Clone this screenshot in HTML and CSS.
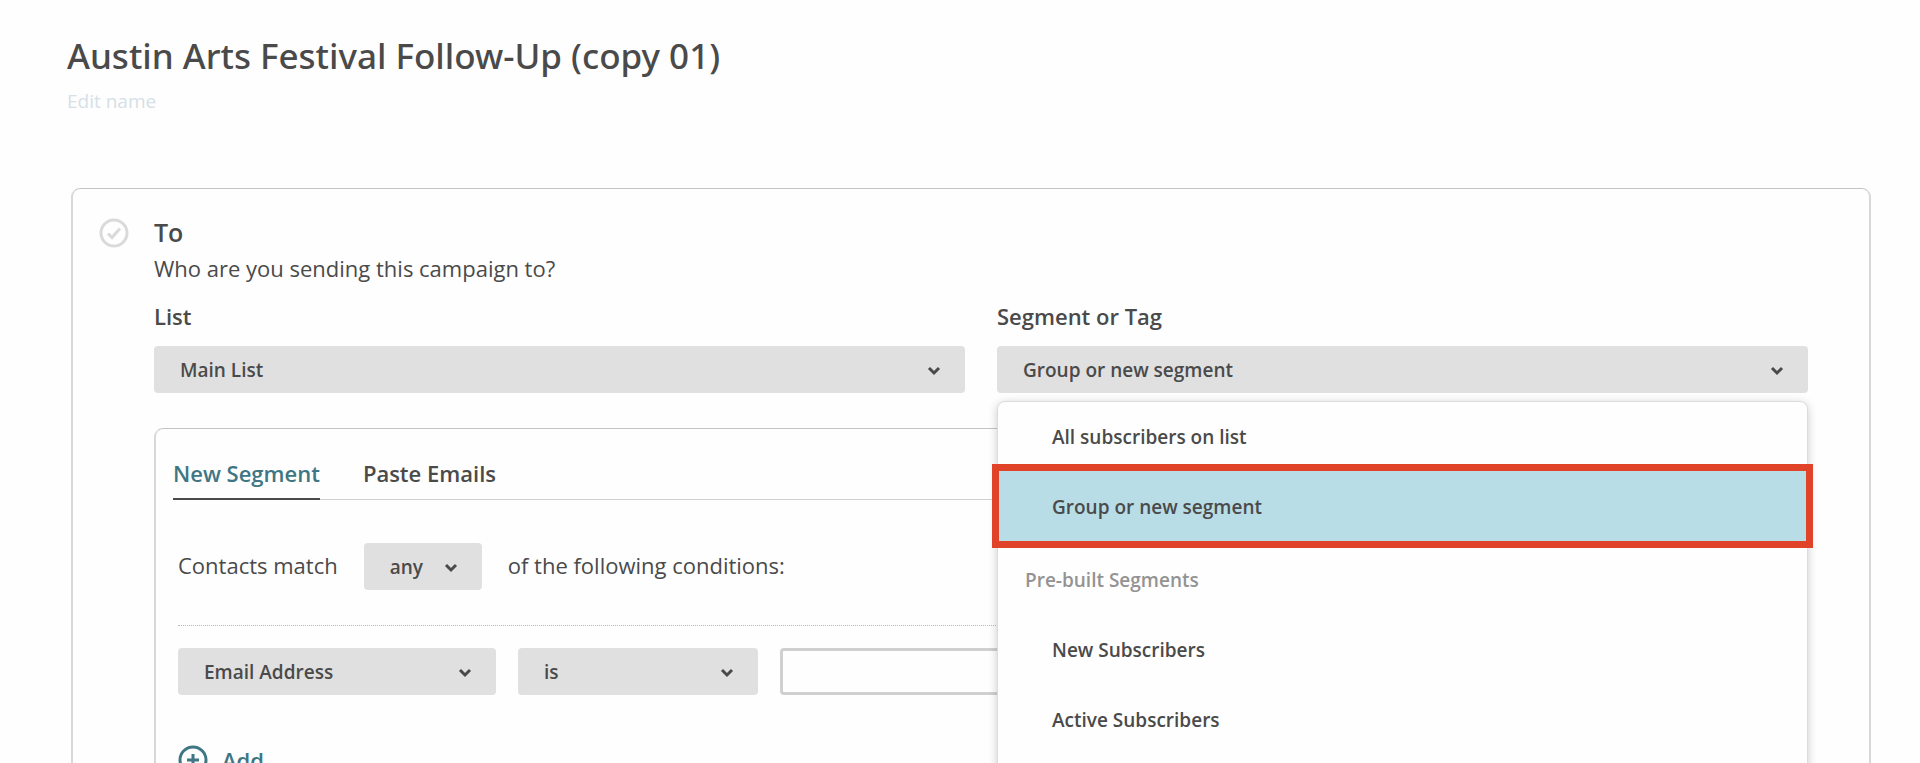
FILE: index.html
```html
<!DOCTYPE html>
<html lang="en">

<head>
    <meta charset="utf-8">
    <title>Austin Arts Festival Follow-Up (copy 01)</title>
    <meta name="viewport" content="width=device-width, initial-scale=1">
    <link rel="stylesheet" href="styles.css">
</head>

<body>
    <header class="page-header">
        <h1>Austin Arts Festival Follow-Up (copy 01)</h1>
        <a class="edit-name" href="#">Edit name</a>
    </header>

    <main class="card">
        <svg class="status-icon" viewBox="0 0 30 30" aria-hidden="true">
            <circle cx="15" cy="15" r="13" />
            <path d="M9 15.5l4 4 8-9" />
        </svg>

        <section class="card-body">
            <h2>To</h2>
            <p class="lead">Who are you sending this campaign to?</p>

            <div class="fields">
                <div class="field">
                    <label for="list">List</label>
                    <div class="select">
                        <select id="list">
                            <option>Main List</option>
                        </select>
                        <svg class="chevron" viewBox="0 0 14 10" aria-hidden="true"><path d="M2 2l5 5 5-5" /></svg>
                    </div>
                </div>
                <div class="field">
                    <label for="segment">Segment or Tag</label>
                    <div class="select">
                        <select id="segment">
                            <option>Group or new segment</option>
                        </select>
                        <svg class="chevron" viewBox="0 0 14 10" aria-hidden="true"><path d="M2 2l5 5 5-5" /></svg>
                    </div>
                    <!-- open dropdown -->
                    <div class="menu">
                        <button type="button" class="menu-item">All subscribers on list</button>
                        <button type="button" class="menu-item active">Group or new segment</button>
                        <div class="menu-heading">Pre-built Segments</div>
                        <button type="button" class="menu-item">New Subscribers</button>
                        <button type="button" class="menu-item">Active Subscribers</button>
                    </div>
                </div>
            </div>

            <div class="panel">
                <nav class="tabs">
                    <button type="button" class="tab selected">New Segment</button>
                    <button type="button" class="tab">Paste Emails</button>
                </nav>

                <div class="conditions">
                    <div class="match-row">
                        <label for="match">Contacts match</label>
                        <div class="select select-match">
                            <select id="match">
                                <option>any</option>
                            </select>
                            <svg class="chevron" viewBox="0 0 14 10" aria-hidden="true"><path d="M2 2l5 5 5-5" /></svg>
                        </div>
                        <span>of the following conditions:</span>
                    </div>

                    <div class="condition-row">
                        <div class="select select-field">
                            <select aria-label="Field">
                                <option>Email Address</option>
                            </select>
                            <svg class="chevron" viewBox="0 0 14 10" aria-hidden="true"><path d="M2 2l5 5 5-5" /></svg>
                        </div>
                        <div class="select select-operator">
                            <select aria-label="Operator">
                                <option>is</option>
                            </select>
                            <svg class="chevron" viewBox="0 0 14 10" aria-hidden="true"><path d="M2 2l5 5 5-5" /></svg>
                        </div>
                        <input class="value" type="text" aria-label="Value">
                    </div>

                    <button type="button" class="add">
                        <svg viewBox="0 0 30 30" aria-hidden="true">
                            <circle cx="15" cy="15" r="13" />
                            <path d="M15 9v12M9 15h12" />
                        </svg>
                        Add
                    </button>
                </div>
            </div>
        </section>
    </main>
</body>

</html>
```

FILE: styles.css
```css
* {
    box-sizing: border-box;
}

body {
    height: 100vh;
    margin: 0;
    padding: 31px 49px 0 71px;
    overflow: hidden;
    background: #fefefe;
    color: #4a4a4a;
    font: 22px/30px "Open Sans", "Noto Sans", sans-serif;
}

h1,
h2,
p {
    margin: 0;
}

button,
select,
input {
    font: inherit;
    color: inherit;
}

button {
    padding: 0;
    border: 0;
    background: none;
    text-align: left;
    cursor: pointer;
}

.page-header {
    margin: 0 0 73px -4px;
}

h1 {
    font-family: "Noto Sans", "Open Sans", sans-serif;
    font-size: 35px;
    line-height: 50px;
    font-weight: 500;
}

.edit-name {
    display: block;
    width: max-content;
    margin-top: 6px;
    font-size: 19px;
    line-height: 28px;
    color: #d5e0e7;
    text-decoration: none;
}

/* campaign card */
.card {
    display: flex;
    gap: 25px;
    padding: 26px 61px 60px 26px;
    border: 2px solid #d8d8d8;
    border-top: 1px solid #c4c4c4;
    border-radius: 9px;
}

.status-icon {
    flex: none;
    width: 30px;
    height: 30px;
    margin-top: 3px;
    fill: none;
    stroke: #dadada;
    stroke-width: 3;
}

.card-body {
    flex: 1;
    min-width: 0;
}

h2 {
    font-size: 25px;
    line-height: 34px;
    font-weight: 600;
}

.lead {
    margin: 4px 0 18px;
}

.fields {
    display: grid;
    grid-template-columns: 1fr 1fr;
    gap: 32px;
    margin-bottom: 35px;
}

.field {
    position: relative;
}

.field label {
    display: block;
    margin-bottom: 15px;
    font-weight: 600;
}

/* selects */
.select {
    position: relative;
}

.select select {
    display: block;
    width: 100%;
    height: 47px;
    padding: 0 48px 0 26px;
    border: 0;
    border-radius: 4px;
    background: #e0e0e0;
    font-size: 19px;
    font-weight: 600;
    appearance: none;
}

.chevron {
    position: absolute;
    top: 20px;
    right: 24px;
    width: 14px;
    height: 10px;
    fill: none;
    stroke: #4a4a4a;
    stroke-width: 3;
    pointer-events: none;
}

/* dropdown menu */
.menu {
    position: absolute;
    z-index: 1;
    top: 100%;
    left: 0;
    right: 0;
    height: 440px;
    margin-top: 8px;
    border: 1px solid #dcdcdc;
    border-radius: 8px;
    background: #fefefe;
    box-shadow: 0 2px 10px rgba(0, 0, 0, 0.2);
    font-size: 19px;
    font-weight: 600;
}

.menu-item {
    display: block;
    width: 100%;
    height: 70px;
    padding-left: 54px;
}

.menu-item.active {
    height: 72px;
    margin-top: -2px;
    padding-top: 2px;
    background: #b9dde7;
    outline: 7px solid #e04328;
    outline-offset: -1px;
}

.menu-heading {
    margin-top: 3px;
    padding: 20px 0 20px 27px;
    color: #939393;
}

/* segment builder */
.panel {
    padding: 29px 17px 40px;
    border: 2px solid #d8d8d8;
    border-top: 1px solid #c4c4c4;
    border-radius: 9px;
}

.tabs {
    display: flex;
    gap: 43px;
    border-bottom: 1px solid #cfcfcf;
}

.tab {
    margin-bottom: -1px;
    padding-bottom: 10px;
    border-bottom: 2px solid transparent;
    font-weight: 600;
}

.tab.selected {
    border-color: #4a4a4a;
    color: #3f7684;
}

.conditions {
    padding: 43px 5px 0;
}

.match-row {
    display: flex;
    align-items: baseline;
    gap: 26px;
    padding-bottom: 35px;
    border-bottom: 1px dotted #bcbcbc;
}

.select-match {
    width: 118px;
}

.condition-row {
    display: flex;
    gap: 22px;
    margin: 22px 0 50px;
}

.select-field {
    width: 318px;
}

.select-operator {
    width: 240px;
}

.value {
    flex: 1;
    min-width: 0;
    height: 47px;
    padding: 0 16px;
    border: 3px solid #d0d0d0;
    border-radius: 4px;
    background: #fefefe;
}

.add {
    display: flex;
    align-items: center;
    gap: 14px;
    color: #3f7684;
    font-weight: 600;
}

.add svg {
    width: 30px;
    height: 30px;
    fill: none;
    stroke: #3f7684;
    stroke-width: 3;
}
```
